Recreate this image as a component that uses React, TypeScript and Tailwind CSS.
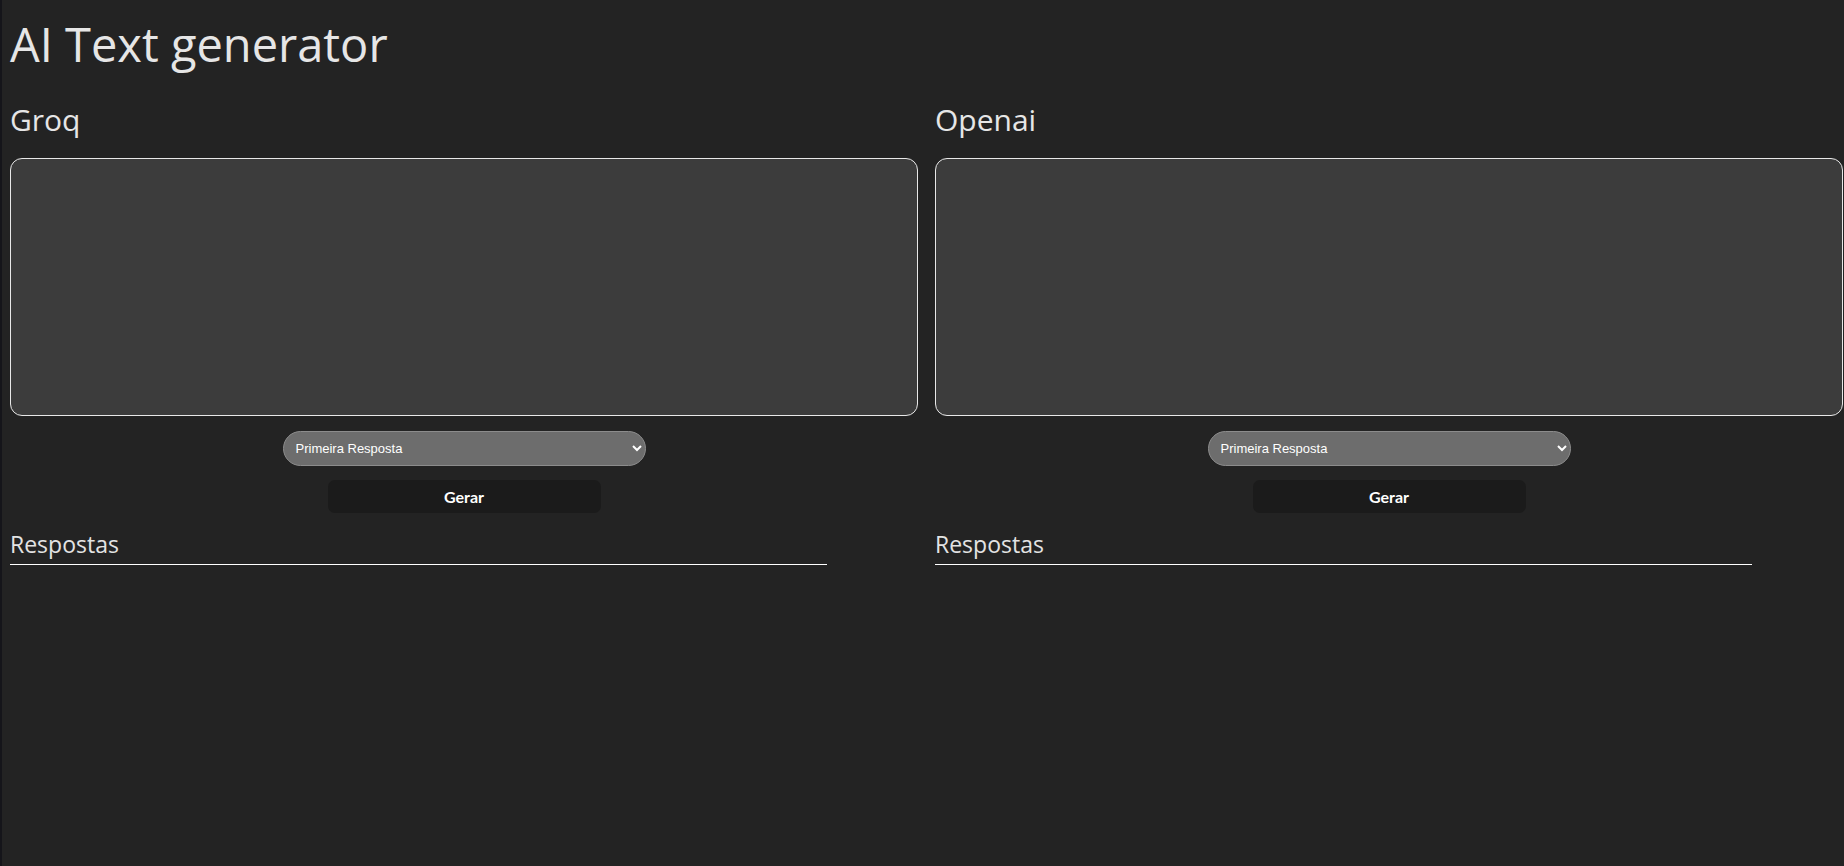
import { useState } from 'react';

const models = ['Groq', 'Openai'];

function GeneratorColumn({ name }: { name: string }) {
  const [prompt, setPrompt] = useState('');
  const [mode, setMode] = useState('primeira');

  return (
    <section className="flex flex-col">
      <h2 className="text-[30px] leading-[40px] text-[#e6e6e6] mb-[18px]">{name}</h2>
      <textarea
        value={prompt}
        onChange={(e) => setPrompt(e.target.value)}
        className="w-full h-[258px] resize-none rounded-[12px] border border-[#e8e8e8] bg-[#3c3c3c] text-white p-2 outline-none"
      />
      <div className="flex flex-col items-center mt-[15px] gap-[14px]">
        <select
          value={mode}
          onChange={(e) => setMode(e.target.value)}
          className="w-[363px] h-[35px] rounded-full border border-[#8c8c8c] bg-[#6d6d6d] text-[13px] text-white pl-[8px] pr-[6px] outline-none"
          style={{ fontFamily: '"Liberation Sans", Arial, sans-serif' }}
        >
          <option value="primeira">Primeira Resposta</option>
          <option value="todas">Todas as Respostas</option>
        </select>
        <button
          type="button"
          className="w-[273px] h-[33px] rounded-[7px] bg-[#1b1b1b] text-white font-bold text-[16px]"
          style={{ fontFamily: 'Lato, "Open Sans", sans-serif' }}
        >
          Gerar
        </button>
      </div>
      <div className="w-[90%] mt-[15px] border-b border-white">
        <h3 className="text-[23px] leading-[32px] text-[#e3e3e3] pb-[4px]">Respostas</h3>
      </div>
    </section>
  );
}

export default function App() {
  return (
    <div
      className="min-h-screen bg-[#232323] border-l-2 border-[#15151a] pl-[8px] pr-px"
      style={{ fontFamily: '"Open Sans", "Noto Sans", sans-serif' }}
    >
      <h1 className="text-[47px] leading-[64px] text-[#e6e6e6] pt-[12px] mb-[24px]">AI Text generator</h1>
      <div className="grid grid-cols-2 gap-[17px]">
        {models.map((m) => (
          <GeneratorColumn key={m} name={m} />
        ))}
      </div>
    </div>
  );
}
